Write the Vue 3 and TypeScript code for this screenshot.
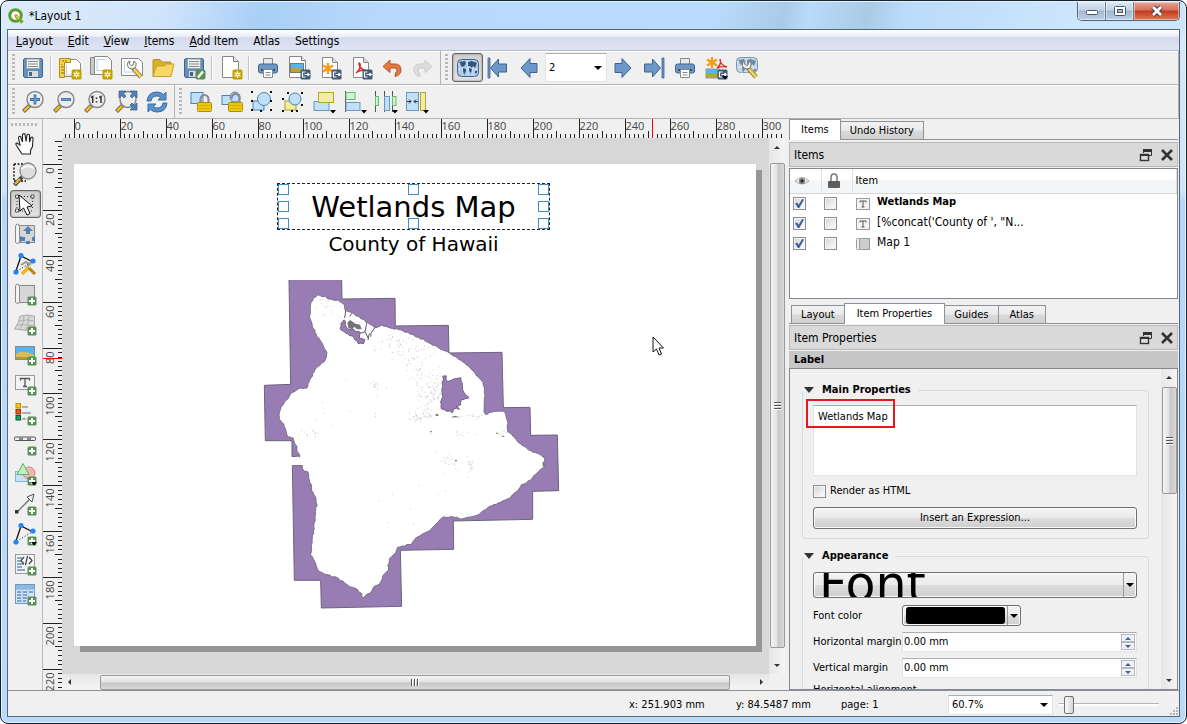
<script setup lang="ts">
import { ref } from 'vue'

interface Tool {
  icon: string
  label: string
  pressed?: boolean
  sep?: boolean
}
interface Tick {
  pos: number
  size: number
  label: string
}
interface LayoutItem {
  name: string
  kind: string
  visible: boolean
  locked: boolean
  bold: boolean
}

const plus =
  '<rect x="14.500" y="14.500" width="9" height="9" rx="1.500" fill="#5a8f55"/><path d="M19 16v6M16 19h6" stroke="#fff" stroke-width="2"/>'
const drop = '<path d="M18 20h6l-3 3.500z" fill="#000"/>'
const star =
  '<rect x="13.500" y="13.500" width="10" height="10" rx="1.500" fill="#c4a000"/><path d="M18.500 15v7M15.500 16.800l6 3.500M15.500 20.200l6-3.500" stroke="#fffbd0" stroke-width="1.200"/><circle cx="18.500" cy="18.500" r="1.900" fill="#fffbd0"/><circle cx="18.500" cy="18.500" r=".8" fill="#c4a000"/>'
const exp =
  '<rect x="13.500" y="13.500" width="10" height="10" rx="1.500" fill="#415a75"/><path d="M18.500 16h-3v5h3M17.500 18.500h4.500M20.500 16.800l1.700 1.700l-1.700 1.700" fill="none" stroke="#fff" stroke-width="1.200"/>'
const page = '<path d="M4.500 1.500h10l5 5v15h-15z" fill="#fff" stroke="#888"/><path d="M14.500 1.500v5h5" fill="#ddd" stroke="#888"/>'
const glass =
  '<path d="M9 15L2.500 21.500" stroke="#555" stroke-width="4"/><path d="M8 16l-5 5" stroke="#f5b921" stroke-width="2.500"/><circle cx="14" cy="9.500" r="8" fill="#ececec" stroke="#858585" stroke-width="1.400"/>'
const printer =
  '<path d="M7.500 2.500h9v7h-9z" fill="#e8e8e8" stroke="#888"/><rect x="2.500" y="8" width="19" height="9" rx="2" fill="#6d97c4" stroke="#45658a"/><path d="M5 14h14" stroke="#34516f" stroke-width="2"/><path d="M7.500 13.500h9v8h-9z" fill="#fff" stroke="#888"/><path d="M9.500 16.500h5M9.500 19h5" stroke="#888"/>'
const floppy =
  '<path d="M3.500 2.500h17l1 1v17l-1 1h-17l-1-1v-17z" fill="#6490bd" stroke="#41638c"/><rect x="5.500" y="3" width="13" height="9.500" fill="#f3f3f3" stroke="#8aa"/><path d="M7 5.500h10M7 8h10M7 10.500h10" stroke="#888"/><rect x="7" y="15" width="10" height="6" fill="#ddd"/><rect x="8" y="16" width="3" height="4" fill="#45658a"/>'
const world =
  '<rect x="1.500" y="3.500" width="21" height="17" rx="4" fill="#a9c8ea" stroke="#41638c"/><path d="M2 8h20M2 13h20M7 4v16M12 4v16M17 4v16" stroke="#e1eefb" stroke-width=".8"/><path d="M3 6l6-1 1 3-3 3-2-1-1-3zM7 12l3 1v2l-2 4-1-4zM12 6l4-1 5 2-2 5-2-2-1 2-2-2-2 0zM13 12l3 1-1 4-2-2zM19 15h2v2h-2z" fill="#345573"/>'
const roll =
  '<path d="M6 3.500h15.500v17H6z" fill="#d6d6d6" stroke="#8a8a8a"/><path d="M2.500 5q0-3 2-3t2 3v16q-4 1-4-1z" fill="#f4f4f4" stroke="#8a8a8a"/>'
const lock =
  '<path d="M12.500 13V9.500a4 4.500 0 0 1 8 0V13" fill="none" stroke="#8b8b8b" stroke-width="2.200"/><rect x="9.500" y="12.500" width="14" height="9" rx="1" fill="#ecc90e" stroke="#b08e00"/><path d="M11 15.500h11M11 18.500h11" stroke="#d4ad00"/>'
const nodes = '<path d="M3 19L8 4l12 6" fill="none" stroke="#111" stroke-width="1.300"/>'
const dots = '<circle cx="3" cy="20" r="2.600" fill="#2684f5"/><circle cx="8" cy="3.500" r="2.600" fill="#2684f5"/><circle cx="20" cy="9" r="2.600" fill="#2684f5"/>'
const wrench =
  '<path d="M13 12l8 9" stroke="#8e7420" stroke-width="4.500"/><path d="M14 13l7 8" stroke="#edcf62" stroke-width="2.800"/><path d="M8 6q-2 4 1 6t6 0l1-2q1-3-2-5l-1 4-2 .5-1.500-1.500.5-3z" fill="#f2f2f2" stroke="#777"/>'
const pic = '<rect x="2.500" y="4.500" width="19" height="13" fill="#58b3f2" stroke="#888"/><path d="M3 12q6-5 18 1v4H3z" fill="#d8bd55"/><path d="M3 15h18v2H3z" fill="#b69635"/>'
const arrowL = '<path d="M3 12L12 2.500v5h7v9h-7v5z" fill="#6c98c9" stroke="#3d638f"/>'
const arrowR = '<path d="M20 12L11 2.500v5H4v9h7v5z" fill="#6c98c9" stroke="#3d638f"/>'
const corner = (a: string) => `<path d="${a}" fill="#4f82bb" stroke="#315d8e" stroke-width=".7"/>`

const icons: Record<string, string> = {
  save: floppy,
  newLayout:
    '<path d="M6.500 3.500h12l4 4v13h-16z" fill="#fff" stroke="#888"/><path d="M8.500 9v10h7" fill="none" stroke="#bccbe8"/><path d="M1.500 2.500h11v4h-6v15h-5z" fill="#f4d54f" stroke="#b39014"/><path d="M4 8v1M3 11h3M3 14h3M3 17h3M5 4v2M8 4v2" stroke="#947300"/>' + star,
  duplicate:
    '<path d="M1.500 1.500h13v17h-13z" fill="#c9c9c9" stroke="#888"/><path d="M5.500 .5h13l4 4v14h-17z" fill="#fff" stroke="#888"/><path d="M8 3.500h8M8 3.500v11h8" fill="none" stroke="#bccbe8"/>' + star,
  manager: '<path d="M1.500 2.500h17l4 4v13h-21z" fill="#fff" stroke="#888"/><path d="M4.500 5v11h12" fill="none" stroke="#bccbe8"/>' + wrench,
  folder:
    '<path d="M2 20.500V4.500q0-1 1-1h6l2 2.500h8q1 0 1 1v3z" fill="#d8ae2d" stroke="#b5902a"/><path d="M2 20.500L5.500 10h8l2-2h7.500l-3 12.500z" fill="#f7d765" stroke="#c9a02a"/>',
  saveAs: floppy + '<rect x="13.500" y="13.500" width="10" height="10" rx="2" fill="#5a8f55"/><path d="M16 21.500l5-6" stroke="#fff" stroke-width="2.500"/>',
  addPage: '<path d="M3.500 .5h11l5 5v16h-16z" fill="#fff" stroke="#888"/><path d="M14.500 .5v5h5" fill="#eee" stroke="#777"/>' + star,
  print: printer,
  image: '<path d="M2.500 .5h12l4 4v17h-16z" fill="#fff" stroke="#888"/><path d="M14.500 .5v4h4" fill="#eee" stroke="#777"/><rect x="3.500" y="7.500" width="13" height="9" fill="#58b3f2" stroke="#777"/><path d="M4 13q5-4 12 1v2H4z" fill="#b9a437"/>' + exp,
  svg: page + '<path d="M10 7v11M5 9.500l10 6M5 15.500l10-6" stroke="#f79a16" stroke-width="2.400"/>' + exp,
  pdf: page + '<path d="M7 17q5-4 4-9-1-2-1 0 1 6 8 7M7 17q3-3 9-3" fill="none" stroke="#df2b23" stroke-width="1.600"/>' + exp,
  undo: '<path d="M3 10.500L10 4v4h5q6 0 6 6 0 5-6 6.500l.5-3.500q1.500-1 1.500-3 0-2-3-2h-4v4.500z" fill="#e27a43" stroke="#b85522"/>',
  redo: '<path d="M21 10.500L14 4v4H9q-6 0-6 6 0 5 6 6.500L8.500 17Q7 16 7 14q0-2 3-2h4v4.500z" fill="#dcdedb" stroke="#c9ccc8"/>',
  atlas: world,
  first: '<path d="M1 2h2v20H1z" fill="#6c98c9" stroke="#3d638f" stroke-width=".8"/><path d="M3.500 12l8-9v5h8v8h-8v5z" fill="#6c98c9" stroke="#3d638f"/>',
  prev: arrowL,
  next: arrowR,
  last: '<path d="M20 2h2v20h-2z" fill="#6c98c9" stroke="#3d638f" stroke-width=".8"/><path d="M18.500 12l-8-9v5h-8v8h8v5z" fill="#6c98c9" stroke="#3d638f"/>',
  atlasExport:
    '<path d="M8 1v11M3 3.500l10 6M3 9.500l10-6" stroke="#f79a16" stroke-width="2.200"/><path d="M13 12q5-4 3-9 0 6 7 8-5-1-10 1" fill="none" stroke="#df2b23" stroke-width="1.400"/><rect x="2" y="13" width="13" height="9" fill="#58b3f2" stroke="#999"/><path d="M2.500 18h12v3.500h-12z" fill="#b9a437"/>' + exp + drop,
  atlasSettings: '<g opacity=".65" transform="translate(0 -2)">' + world.replace('height="17"', 'height="15"') + '</g>' + wrench,
  zoomIn: glass + '<path d="M14 4.500v10M9 9.500h10" stroke="#3d6fa8" stroke-width="2.800"/><path d="M14 5.500v8M10 9.500h8" stroke="#6ea0d6" stroke-width="1.200"/>',
  zoomOut: glass + '<path d="M9 9.500h10" stroke="#3d6fa8" stroke-width="2.800"/><path d="M10 9.500h8" stroke="#6ea0d6" stroke-width="1.200"/>',
  zoomOne: glass + '<path d="M9.700 13V6.500L8 7.500M18 13V6.500L16.300 7.500M13.500 7.500v1.500M13.500 11v1.500" fill="none" stroke="#333" stroke-width="1.500"/>',
  zoomFull:
    glass +
    corner('M5 1h7L9.500 3.500 12 6 10 8 7.500 5.500 5 8z') +
    corner('M23 1h-7l2.500 2.500L16 6l2 2 2.500-2.500L23 8z') +
    corner('M23 20h-7l2.500-2.500L16 15l2-2 2.500 2.500L23 13z'),
  refresh:
    '<path d="M2 11q1-9 10-9 4 0 6.500 2.500L21 2v8h-8l2.500-2.500Q14 6 12 6 7 6 6 11z" fill="#5b90cc" stroke="#3d6ca0"/><path d="M22 13q-1 9-10 9-4 0-6.500-2.500L3 22v-8h8l-2.500 2.500Q10 18 12 18q5 0 6-5z" fill="#5b90cc" stroke="#3d6ca0"/>',
  lockItems: '<rect x="3" y="2.500" width="12" height="11" fill="#bfe0f7" stroke="#4f83b5"/>' + lock,
  unlockItems:
    '<rect x="3" y="5.500" width="10" height="9" fill="#bfe0f7" stroke="#4f83b5"/><circle cx="16" cy="7" r="5" fill="#bfe0f7" stroke="#4f83b5"/>' +
    lock.replace('M12.500 13V9.500a4 4.500 0 0 1 8 0V13', 'M12.500 9V8a4 4.500 0 0 1 8 1V13'),
  group:
    '<rect x="3" y="11" width="11" height="9" fill="#bfe0f7" stroke="#4f83b5"/><circle cx="14" cy="9" r="6.500" fill="#bfe0f7" stroke="#4f83b5"/><path d="M1 1h2v2H1zM20 1h2v2h-2zM1 19h2v2H1zM20 19h2v2h-2zM10 20h2v2h-2zM20 10h2v2h-2zM1 10h2v2H1z" fill="#111"/>',
  ungroup:
    '<rect x="4" y="11" width="11" height="9" fill="#f3eda0" stroke="#ae9e31"/><circle cx="14" cy="9" r="6" fill="#bfe0f7" stroke="#4f83b5"/><path d="M6 2h2v2H6zM20 2h2v2h-2zM1 8h2v2H1zM1 20h2v2H1zM15 20h2v2h-2zM20 14h2v2h-2zM10 20h2v2h-2z" fill="#111"/>',
  raise: '<rect x="2" y="11.500" width="15" height="9" fill="#bfe0f7" stroke="#6a98c2"/><rect x="6.500" y="2.500" width="15" height="10" fill="#f3eda0" stroke="#b4a437"/>' + drop,
  align: '<path d="M2.500 1v21" stroke="#555"/><rect x="3" y="2.500" width="9" height="7" fill="#c8f7cc" stroke="#70b577"/><rect x="3" y="12.500" width="14" height="8" fill="#bfe0f7" stroke="#6a98c2"/>' + drop,
  distribute:
    '<path d="M1.500 1v21M10.500 1v21M18.500 1v21" stroke="#555"/><rect x="1.500" y="6.500" width="3" height="9" fill="#c8f7cc" stroke="#70b577"/><rect x="10.500" y="6.500" width="5" height="14" fill="#bfe0f7" stroke="#6a98c2"/><rect x="18.500" y="6.500" width="3.500" height="9" fill="#c8f7cc" stroke="#70b577"/>' + drop,
  resize:
    '<rect x="1.500" y="2.500" width="12" height="18" fill="#bfe0f7" stroke="#6a98c2"/><rect x="15.500" y="2.500" width="5" height="18" fill="#f3eda0" stroke="#b4a437"/><path d="M2 11.500h4M4 9.500l2 2-2 2M13 11.500H9M11 9.500l-2 2 2 2" fill="none" stroke="#333"/>' + drop,
  pan: '<path d="M8 20.500l-4.500-7q-1.500-2.500.5-2.500l3 2L5.500 6q0-2 2-1.500L9.500 10 9.500 3q.500-2 2.500-1L13 9.500 14 3q1-1.500 2.500 0L16.500 10l1.500-4.500q2-1 2 1l-.5 8-2 4v3.500H9z" fill="#fff" stroke="#222" stroke-width="1.100"/>',
  zoomTool:
    '<path d="M1 2h9M1 2v17M1 19h12" stroke="#111" stroke-width="1.400" stroke-dasharray="2 1.500" fill="none"/><path d="M9 15L1.500 23" stroke="#444" stroke-width="4"/><path d="M7 17l-5 5" stroke="#f5b921" stroke-width="2.300"/><circle cx="15" cy="9" r="8" fill="#ddd" stroke="#888" stroke-width="1.300"/><path d="M8 7q5-5 13-1" stroke="#f8f8f8" fill="none" stroke-width="2"/>',
  select:
    '<path d="M5 4.500h13M4 6v12M19.500 6v12M6 19h13" stroke="#333" stroke-dasharray="1 2" fill="none"/><path d="M2.500 3h3v3h-3zM18 3h3v3h-3zM2.500 17h3v3h-3z" fill="#eee" stroke="#555"/><path d="M6 3l1 16 3.500-3 3.500 7 3-1.500-3-6.500 5-1z" fill="#fff" stroke="#111"/>',
  moveContent:
    roll + '<path d="M15 4l5 5h-3v3h-4V9h-3zM13 19h4v3h-4zM22 14v6l-3-1.500v-3zM7 14l2 1h3v4H9l-2 1z" fill="#4f7fb4"/>',
  editNodes: nodes + dots + '<path d="M4 19L19 10" stroke="#222" stroke-dasharray="1 2"/><path d="M8 13l5-3 4 2-3 3 8 7" fill="none" stroke="#9a9a9a" stroke-width="2"/><path d="M16 15l-7 7" stroke="#edb61e" stroke-width="3.500"/><path d="M16 16l6 6" stroke="#b98414" stroke-width="3"/>',
  addMap: roll + plus,
  add3d: '<path d="M1.500 17Q6 11 7 4q7-2 14.500 0v14q-9 1-20-1z" fill="#d8d8d8" stroke="#aaa"/><path d="M6 9q8-2 15 0M4 13q9-1 17 1M11 3.500q0 8-4 14M16 3.500q0 8-3 14" fill="none" stroke="#b3b3b3"/>' + plus,
  addPicture: pic + plus,
  addLabel: '<rect x="2.500" y="3.500" width="19" height="14" fill="#f4f4f4" stroke="#999"/><path d="M7.500 8.500V6.500h9v2M12 6.500v8M10 14.500h4" fill="none" stroke="#555" stroke-width="1.300"/>' + plus,
  addLegend:
    '<rect x="3" y="1.500" width="4.500" height="4.500" fill="#fdc50d" stroke="#c68c00"/><rect x="3" y="7.500" width="4.500" height="4.500" fill="#f4511e" stroke="#a52d00"/><rect x="3" y="13.500" width="4.500" height="4.500" fill="#12a35b" stroke="#00622f"/><path d="M9 5h6M9 11h9M9 17h4" stroke="#999" stroke-width="1.600"/>' + plus,
  addScale: '<rect x="1.500" y="5" width="21" height="3.500" rx="1" fill="#eee" stroke="#555"/><path d="M6 6.700h4M14 6.700h4" stroke="#888" stroke-width="2.500"/>' + plus,
  addShape: '<rect x="2.500" y="9.500" width="13" height="10" fill="#c4e2f8" stroke="#86b4da"/><circle cx="16" cy="11" r="6" fill="#f3b4b4" stroke="#d88383"/><path d="M10 1.500l6 11H4z" fill="#bdf0bd" stroke="#62b166"/>' + plus + drop,
  addArrow: '<path d="M4 20L18 6" stroke="#777" stroke-width="1.400"/><path d="M21 2l-7 3 5 5z" fill="#eee" stroke="#555"/><rect x="2" y="18" width="3.500" height="3.500" fill="#333"/>' + plus,
  addNodes: nodes + '<path d="M4 19L19 10" stroke="#222" stroke-dasharray="1 2"/>' + dots + plus + drop,
  addHtml:
    '<rect x="2.500" y="2.500" width="19" height="19" fill="#f4f4f4" stroke="#999"/><path d="M4 6h5M4 9h4M4 12h7M4 15h5M4 18h8" stroke="#5d8fc5" stroke-width="1.600"/><path d="M11 5L8 8.500l3 3.500M16 5l3 3.500-3 3.500M14.500 4l-2 9" fill="none" stroke="#444" stroke-width="1.200"/>' + plus,
  addTable:
    '<rect x="2.500" y="2.500" width="19" height="19" fill="#d5e5f6" stroke="#6d98c6"/><path d="M3 3h18v4.500H3z" fill="#8db6e0"/><path d="M4 10h4M10 10h4M16 10h4M4 13h4M10 13h4M4 16h4M10 16h4M4 19h4M10 19h3" stroke="#5d8fc5" stroke-width="1.300"/><path d="M2.500 7.500h19M9 3v18M15 3v18" stroke="#a5c2e2" stroke-width=".8"/>' + plus,
}

const menus = [
  ['L', 'ayout'], ['E', 'dit'], ['V', 'iew'], ['I', 'tems'], ['A', 'dd Item'], ['', 'Atlas'], ['', 'Settings'],
]
const layoutTools: Tool[] = [
  { icon: 'save', label: 'Save project', sep: true },
  { icon: 'newLayout', label: 'New layout' },
  { icon: 'duplicate', label: 'Duplicate layout' },
  { icon: 'manager', label: 'Layout manager' },
  { icon: 'folder', label: 'Add items from template' },
  { icon: 'saveAs', label: 'Save as template', sep: true },
  { icon: 'addPage', label: 'Add pages', sep: true },
  { icon: 'print', label: 'Print layout' },
  { icon: 'image', label: 'Export as image' },
  { icon: 'svg', label: 'Export as SVG' },
  { icon: 'pdf', label: 'Export as PDF' },
  { icon: 'undo', label: 'Undo' },
  { icon: 'redo', label: 'Redo' },
]
const atlasBefore: Tool[] = [
  { icon: 'atlas', label: 'Preview atlas', pressed: true },
  { icon: 'first', label: 'First feature' },
  { icon: 'prev', label: 'Previous feature' },
]
const atlasAfter: Tool[] = [
  { icon: 'next', label: 'Next feature' },
  { icon: 'last', label: 'Last feature' },
  { icon: 'print', label: 'Print atlas' },
  { icon: 'atlasExport', label: 'Export atlas' },
  { icon: 'atlasSettings', label: 'Atlas settings' },
]
const zoomTools: Tool[] = [
  { icon: 'zoomIn', label: 'Zoom in' },
  { icon: 'zoomOut', label: 'Zoom out' },
  { icon: 'zoomOne', label: 'Zoom to 100%' },
  { icon: 'zoomFull', label: 'Zoom full' },
  { icon: 'refresh', label: 'Refresh view' },
]
const actionTools: Tool[] = [
  { icon: 'lockItems', label: 'Lock selected items' },
  { icon: 'unlockItems', label: 'Unlock all items' },
  { icon: 'group', label: 'Group items' },
  { icon: 'ungroup', label: 'Ungroup items' },
  { icon: 'raise', label: 'Raise selected items' },
  { icon: 'align', label: 'Align selected items' },
  { icon: 'distribute', label: 'Distribute items' },
  { icon: 'resize', label: 'Resize items' },
]
const sideTools: Tool[] = [
  { icon: 'pan', label: 'Pan layout' },
  { icon: 'zoomTool', label: 'Zoom' },
  { icon: 'select', label: 'Select or move item', pressed: true },
  { icon: 'moveContent', label: 'Move item content' },
  { icon: 'editNodes', label: 'Edit nodes item' },
  { icon: 'addMap', label: 'Add map' },
  { icon: 'add3d', label: 'Add 3D map' },
  { icon: 'addPicture', label: 'Add picture' },
  { icon: 'addLabel', label: 'Add label' },
  { icon: 'addLegend', label: 'Add legend' },
  { icon: 'addScale', label: 'Add scale bar' },
  { icon: 'addShape', label: 'Add shape' },
  { icon: 'addArrow', label: 'Add arrow' },
  { icon: 'addNodes', label: 'Add node item' },
  { icon: 'addHtml', label: 'Add HTML' },
  { icon: 'addTable', label: 'Add attribute table' },
]

const scale = 2.294
function ticks(origin: number, from: number, to: number): Tick[] {
  const out: Tick[] = []
  for (let mm = from; mm <= to; mm += 2) {
    const major = mm % 20 === 0 && mm >= 0
    out.push({
      pos: Math.round(origin + mm * scale) + 0.5,
      size: major ? 19 : mm % 10 === 0 ? 7 : 4,
      label: major ? String(mm) : '',
    })
  }
  return out
}
const hTicks = ticks(12, -4, 308)
const vTicks = ticks(26, -10, 228)

function random(seed: number): () => number {
  let s = seed
  return () => {
    s = (s * 16807) % 2147483647
    return s / 2147483647
  }
}
function roughPath(flat: number[], amount: number): string {
  const rnd = random(77)
  const pts: string[] = []
  const n = flat.length / 2
  for (let i = 0; i < n; i++) {
    const x0 = flat[i * 2]
    const y0 = flat[i * 2 + 1]
    const x1 = flat[((i + 1) % n) * 2]
    const y1 = flat[((i + 1) % n) * 2 + 1]
    const steps = Math.max(1, Math.round(Math.hypot(x1 - x0, y1 - y0) / 7))
    for (let k = 0; k < steps; k++) {
      const t = k / steps
      const x = x0 + (x1 - x0) * t + (rnd() - 0.5) * amount
      const y = y0 + (y1 - y0) * t + (rnd() - 0.5) * amount
      pts.push(`${x.toFixed(1)},${y.toFixed(1)}`)
    }
  }
  return `M${pts.join('L')}Z`
}
const quads =
  'M117 330L122 643L43 646L46 812H126V860L148 858L157 887H127L133 1231H212L214 1314L455 1309L451 1141L611 1138L610 1053L848 1048V964L926 962L922 795L842 796L840 712L760 713L756 547L597 549L595 466L436 468L435 385L276 387L275 330'
const coast = roughPath([
  205, 376, 225, 380, 245, 388, 270, 393, 285, 405, 287, 420, 300, 427, 320, 437, 340, 450, 355, 460, 377, 472, 385, 470,
  400, 466, 420, 474, 440, 477, 470, 487, 500, 500, 530, 515, 560, 530, 590, 545, 620, 563, 650, 585, 675, 610, 695, 632,
  703, 648, 704, 690, 703, 725, 708, 733, 725, 727, 745, 722, 760, 725, 770, 740, 772, 760, 772, 785, 790, 798, 797, 810,
  815, 825, 835, 840, 855, 848, 875, 855, 886, 865, 880, 890, 860, 910, 835, 933, 815, 945, 800, 965, 780, 983, 750, 997,
  720, 1010, 700, 1022, 680, 1035, 660, 1042, 635, 1046, 605, 1040, 580, 1042, 560, 1060, 548, 1072, 540, 1082, 520, 1090,
  500, 1100, 485, 1120, 465, 1128, 443, 1132, 435, 1150, 420, 1165, 415, 1180, 415, 1200, 400, 1215, 388, 1245, 375, 1248,
  360, 1268, 337, 1285, 334, 1270, 315, 1255, 290, 1243, 262, 1223, 225, 1213, 207, 1205, 195, 1180, 183, 1155, 184, 1125,
  190, 1090, 195, 1040, 200, 1005, 195, 980, 185, 963, 183, 945, 177, 930, 175, 905, 160, 903, 155, 887, 147, 858, 140, 830,
  130, 805, 110, 795, 104, 768, 92, 755, 86, 740, 92, 710, 110, 690, 130, 665, 150, 655, 170, 655, 180, 630, 195, 600, 215,
  580, 228, 570, 232, 550, 222, 530, 205, 505, 190, 475, 180, 440, 180, 410, 190, 385,
], 4)
const wetlandEast = roughPath([
  580, 620, 590, 618, 590, 635, 612, 625, 632, 624, 638, 640, 640, 658, 646, 672, 656, 685, 634, 690, 632, 705, 620, 708,
  628, 717, 612, 716, 606, 728, 590, 722, 574, 716, 572, 695, 578, 680, 574, 660, 578, 640,
], 4)
const wetlandNorth = roughPath([
  275, 462, 284, 448, 290, 475, 305, 478, 318, 482, 332, 486, 330, 502, 345, 508, 340, 522, 326, 520, 305, 498, 282, 486, 270, 474,
], 4)

function specks(): string {
  const rnd = random(4242)
  const clusters = [
    [440, 530, 70, 45, 45], [540, 680, 45, 60, 80], [510, 740, 45, 16, 40], [230, 410, 40, 45, 20], [370, 645, 22, 20, 12],
    [590, 880, 40, 35, 18], [660, 890, 12, 40, 18], [170, 790, 45, 15, 12], [640, 790, 60, 10, 8], [760, 790, 25, 12, 6],
    [670, 740, 50, 10, 12], [450, 1000, 170, 90, 8], [500, 560, 60, 60, 25], [400, 700, 220, 100, 12], [525, 620, 60, 40, 30],
  ]
  let d = ''
  for (const [cx, cy, rx, ry, n] of clusters) {
    for (let i = 0; i < n; i++) {
      const x = cx + (rnd() + rnd() - 1) * rx
      const y = cy + (rnd() + rnd() - 1) * ry
      d += `M${x.toFixed(0)} ${y.toFixed(0)}h3`
    }
  }
  return d
}
const speckPath = specks()

const items = ref<LayoutItem[]>([
  { name: 'Wetlands Map', kind: 'label', visible: true, locked: false, bold: true },
  { name: "[%concat('County of ', \"N...", kind: 'label', visible: true, locked: false, bold: false },
  { name: 'Map 1', kind: 'map', visible: true, locked: false, bold: false },
])
const handles = ['nw', 'n', 'ne', 'w', 'e', 'sw', 's', 'se']
const labelText = ref('Wetlands Map')
const renderHtml = ref(false)
const feature = ref('2')
const zoom = ref('60.7%')
const zoomLevel = ref(5)
const hMargin = ref('0.00 mm')
const vMargin = ref('0.00 mm')
</script>

<template>
  <div class="window">
    <header class="titlebar">
      <svg class="logo" viewBox="0 0 16 16" aria-hidden="true">
        <circle cx="7.500" cy="7.500" r="5.800" fill="#fff" stroke="#5b9e2f" stroke-width="3" />
        <path d="M8 8l6.500 6.500" stroke="#6fb02f" stroke-width="3.400" />
        <path d="M6.500 6.500h3.500L7 10z" fill="#ee7913" />
        <path d="M8.500 8l2.500 2.500" stroke="#f3e04a" stroke-width="1.600" />
      </svg>
      <span class="title">*Layout 1</span>
      <div class="winbtns">
        <button class="wb" aria-label="Minimize"><svg viewBox="0 0 14 12"><rect x="1.500" y="5.500" width="11" height="4" rx="1" fill="#fff" stroke="#4c5568" /></svg></button>
        <button class="wb" aria-label="Maximize"><svg viewBox="0 0 14 12"><rect x="1.500" y="1.500" width="11" height="9" rx="1" fill="#fff" stroke="#4c5568" /><rect x="4.500" y="4.500" width="5" height="3" fill="#a9bdd4" stroke="#4c5568" /></svg></button>
        <button class="wb close" aria-label="Close"><svg viewBox="0 0 14 12"><path d="M3 2l8 8M11 2l-8 8" stroke="#4f3a4a" stroke-width="4.600" /><path d="M3 2l8 8M11 2l-8 8" stroke="#fff" stroke-width="2.800" /></svg></button>
      </div>
    </header>

    <div class="client">
      <nav class="menubar">
        <button v-for="m in menus" :key="m[1]" class="menu"><u>{{ m[0] }}</u>{{ m[1] }}</button>
      </nav>

      <div class="toolrow">
        <div class="toolbar">
          <i class="grip"></i>
          <template v-for="t in layoutTools" :key="t.icon">
            <button class="tool" :aria-label="t.label"><svg viewBox="0 0 24 24" v-html="icons[t.icon]"></svg></button>
            <i v-if="t.sep" class="sep"></i>
          </template>
        </div>
        <div class="toolbar grow atlasbar">
          <i class="grip"></i>
          <button v-for="t in atlasBefore" :key="t.icon" class="tool" :class="{ pressed: t.pressed }" :aria-label="t.label"><svg viewBox="0 0 24 24" v-html="icons[t.icon]"></svg></button>
          <div class="combo feature">
            <select v-model="feature" aria-label="Atlas feature"><option>1</option><option>2</option><option>3</option></select>
          </div>
          <button v-for="t in atlasAfter" :key="t.icon" class="tool" :aria-label="t.label"><svg viewBox="0 0 24 24" v-html="icons[t.icon]"></svg></button>
        </div>
      </div>
      <div class="toolrow">
        <div class="toolbar">
          <i class="grip"></i>
          <button v-for="t in zoomTools" :key="t.icon" class="tool" :aria-label="t.label"><svg viewBox="0 0 24 24" v-html="icons[t.icon]"></svg></button>
        </div>
        <div class="toolbar grow">
          <i class="grip"></i>
          <button v-for="t in actionTools" :key="t.icon" class="tool" :aria-label="t.label"><svg viewBox="0 0 24 24" v-html="icons[t.icon]"></svg></button>
        </div>
      </div>

      <main class="main">
        <aside class="side">
          <i class="grip flat"></i>
          <button v-for="t in sideTools" :key="t.icon" class="tool" :class="{ pressed: t.pressed }" :aria-label="t.label"><svg viewBox="0 0 24 24" v-html="icons[t.icon]"></svg></button>
        </aside>

        <section class="workspace">
          <div class="ruler-corner"></div>
          <svg class="ruler-h" aria-hidden="true">
            <g v-for="t in hTicks" :key="t.pos">
              <line :x1="t.pos" :x2="t.pos" :y1="19 - t.size" y2="19" class="tick" />
              <text v-if="t.label" :x="t.pos" y="11">{{ t.label }}</text>
            </g>
            <line x1="590.5" x2="590.5" y1="0" y2="19" class="mark" />
          </svg>
          <svg class="ruler-v" aria-hidden="true">
            <g v-for="t in vTicks" :key="t.pos">
              <line :y1="t.pos" :y2="t.pos" :x1="19 - t.size" x2="19" class="tick" />
              <text v-if="t.label" :transform="`translate(11 ${t.pos + 3}) rotate(-90)`" text-anchor="end">{{ t.label }}</text>
            </g>
            <line x1="0" x2="19" y1="220.5" y2="220.5" class="mark" />
          </svg>
          <div class="canvas">
            <div class="page">
              <svg class="map" viewBox="0 300 990 1040">
                <path :d="quads" fill="#987db5" stroke="#6d627b" stroke-width="3" />
                <path :d="coast" fill="#fff" stroke="#6b6478" stroke-width="2.500" />
                <path d="M120 862h34l5 23h-40z" fill="#fff" />
                <path :d="wetlandEast" fill="#987db5" stroke="#5f5670" stroke-width="2.500" />
                <path :d="wetlandNorth" fill="#987db5" stroke="#5f5670" stroke-width="2.500" />
                <path d="M292 458l8-8 8 5 8 6 14 3 5 14-14 0-8-8-6 8-12-4z" fill="#77717d" />
                <path d="M287 422l-3 22M305 430l-6 10M350 460l-5 25 10 20M375 472l-12 18-1 10M345 485l-14 5M358 490l-4 20" fill="none" stroke="#5f5670" stroke-width="3" />
                <path d="M602 742l12-4 18 4z" fill="#5f5670" />
                <path :d="speckPath" stroke="#777" stroke-width="2" opacity=".5" />
                <path d="M557 732h8v6h-8zM878 875h5v14h-5zM738 788h7v3h-7zM755 797h8v3h-8zM615 870h6v4h-6zM540 783h5v4h-5z" fill="#777" />
              </svg>
              <div class="label-item selected">
                Wetlands Map
                <i v-for="h in handles" :key="h" class="handle" :class="h"></i>
              </div>
              <div class="label-item county">County of Hawaii</div>
            </div>
            <svg class="pointer" viewBox="0 0 12 20"><path d="M1 1v15l3.500-3 2.500 6 2.500-1-2.500-6h4.500z" fill="#fff" stroke="#111" /></svg>
          </div>
          <div class="scroll-v">
            <i class="arr up"></i><div class="track"><i class="thumb"><b></b></i></div><i class="arr down"></i>
          </div>
          <div class="scroll-h">
            <i class="arr left"></i><div class="track"><i class="thumb"><b></b></i></div><i class="arr right"></i>
          </div>
          <div class="scroll-corner"></div>
        </section>

        <aside class="docks">
          <div class="tabs" role="tablist">
            <button class="tab active" role="tab" aria-selected="true">Items</button>
            <button class="tab" role="tab">Undo History</button>
          </div>
          <div class="docktitle">
            <span>Items</span>
            <button aria-label="Float items panel"><svg viewBox="0 0 14 14"><path d="M4.500 5V1.500h8v6H9" fill="none" stroke="#333" /><path d="M4 1h9v3H4z" fill="#333" /><rect x="1.500" y="6.500" width="8" height="6" fill="#ddd" stroke="#333" stroke-width="1.400" /><path d="M1 6h9v2H1z" fill="#333" /></svg></button>
            <button aria-label="Close items panel"><svg viewBox="0 0 14 14"><path d="M2 2l10 10M12 2L2 12" stroke="#333" stroke-width="2.600" /></svg></button>
          </div>
          <div class="itemlist">
            <table>
              <colgroup><col class="c-check" /><col class="c-check" /><col /></colgroup>
              <thead>
                <tr>
                  <th><svg class="eye" viewBox="0 0 16 12"><path d="M1 6q7-7 14 0-7 6-14 0z" fill="#eee" stroke="#aaa" /><circle cx="8" cy="6" r="3" fill="#777" /><circle cx="8" cy="6" r="1.300" fill="#222" /></svg></th>
                  <th><svg class="padlock" viewBox="0 0 12 16"><path d="M3 8V4.500a3 3.500 0 0 1 6 0V8" fill="none" stroke="#777" stroke-width="1.500" /><rect y="8" width="12" height="7" rx="1" fill="#5d5d5d" /></svg></th>
                  <th class="name">Item</th>
                </tr>
              </thead>
              <tbody>
                <tr v-for="it in items" :key="it.name">
                  <td><input v-model="it.visible" type="checkbox" :aria-label="`${it.name} visible`" /></td>
                  <td><input v-model="it.locked" type="checkbox" :aria-label="`${it.name} locked`" /></td>
                  <td>
                    <div class="cell">
                      <svg viewBox="0 0 14 12">
                        <template v-if="it.kind === 'label'"><rect x=".5" y=".5" width="13" height="11" fill="#f4f4f4" stroke="#999" /><path d="M4 4.500V3h6v1.500M7 3v6M5.500 9h3" fill="none" stroke="#555" /></template>
                        <template v-else><rect x="2.500" y=".5" width="11" height="11" fill="#ccc" stroke="#999" /><rect x=".5" y=".5" width="3" height="11" rx="1" fill="#f3f3f3" stroke="#999" /></template>
                      </svg>
                      <span :class="{ bold: it.bold }">{{ it.name }}</span>
                    </div>
                  </td>
                </tr>
              </tbody>
            </table>
          </div>

          <div class="tabs lower" role="tablist">
            <button class="tab" role="tab">Layout</button>
            <button class="tab active" role="tab" aria-selected="true">Item Properties</button>
            <button class="tab" role="tab">Guides</button>
            <button class="tab" role="tab">Atlas</button>
          </div>
          <div class="docktitle">
            <span>Item Properties</span>
            <button aria-label="Float properties panel"><svg viewBox="0 0 14 14"><path d="M4.500 5V1.500h8v6H9" fill="none" stroke="#333" /><path d="M4 1h9v3H4z" fill="#333" /><rect x="1.500" y="6.500" width="8" height="6" fill="#ddd" stroke="#333" stroke-width="1.400" /><path d="M1 6h9v2H1z" fill="#333" /></svg></button>
            <button aria-label="Close properties panel"><svg viewBox="0 0 14 14"><path d="M2 2l10 10M12 2L2 12" stroke="#333" stroke-width="2.600" /></svg></button>
          </div>
          <h2 class="kind">Label</h2>
          <div class="props">
            <form class="form" @submit.prevent>
              <fieldset class="main-props">
                <legend><i class="tri"></i>Main Properties</legend>
                <div class="textwrap">
                  <textarea v-model="labelText" aria-label="Label text" spellcheck="false"></textarea>
                  <i class="callout"></i>
                </div>
                <label class="check"><input v-model="renderHtml" type="checkbox" />Render as HTML</label>
                <button type="button" class="push">Insert an Expression...</button>
              </fieldset>
              <fieldset class="appearance">
                <legend><i class="tri"></i>Appearance</legend>
                <button type="button" class="push fontbtn" aria-label="Font"><span class="fonttext">Font</span><i class="split"></i></button>
                <div class="row">
                  <label for="fcolor">Font color</label>
                  <button id="fcolor" type="button" class="push colorbtn"><i class="swatch"></i><i class="split"></i></button>
                </div>
                <div class="row">
                  <label for="hm">Horizontal margin</label>
                  <div class="spin"><input id="hm" v-model="hMargin" type="text" /><span class="steps"><button type="button" aria-label="Increase"><i class="s-up"></i></button><button type="button" aria-label="Decrease"><i class="s-down"></i></button></span></div>
                </div>
                <div class="row">
                  <label for="vm">Vertical margin</label>
                  <div class="spin"><input id="vm" v-model="vMargin" type="text" /><span class="steps"><button type="button" aria-label="Increase"><i class="s-up"></i></button><button type="button" aria-label="Decrease"><i class="s-down"></i></button></span></div>
                </div>
                <div class="align-label">Horizontal alignment</div>
              </fieldset>
            </form>
            <div class="scroll-v inner">
              <i class="arr up"></i><div class="track"><i class="thumb"><b></b></i></div><i class="arr down"></i>
            </div>
          </div>
        </aside>
      </main>

      <footer class="status">
        <span class="sx">x: 251.903 mm</span>
        <span class="sy">y: 84.5487 mm</span>
        <span class="sp">page: 1</span>
        <div class="combo zoom">
          <select v-model="zoom" aria-label="Zoom level"><option>60.7%</option><option>100%</option></select>
        </div>
        <input v-model="zoomLevel" class="slider" type="range" min="0" max="100" aria-label="Zoom" />
        <svg class="sizegrip" viewBox="0 0 9 9"><path d="M7 1h2M7 4h2M4 4h2M7 7h2M4 7h2M1 7h2" stroke="#b5b5b5" stroke-width="2" /></svg>
      </footer>
    </div>
  </div>
</template>

<style>
body {
  margin: 0;
  background: #fff;
}
</style>

<style scoped>
* {
  box-sizing: border-box;
}
i {
  display: block;
  font-style: normal;
}
button {
  font: inherit;
  color: inherit;
  padding: 0;
  border: 0;
  background: none;
}
.window {
  height: 100vh;
  display: flex;
  flex-direction: column;
  padding: 1px 6px 6px;
  border: 1px solid #1d232b;
  border-radius: 8px;
  background:
    linear-gradient(100deg, #dcebfa, #cfe4fa 14%, #bcdaf8 18%, #a9cff5 22%, #b7d9fa 32%, #badcfc 60%, #a9cbe8 66%, #b9dbfa 68%, #a9cbe6 73%, #b9dbfa 76%, #cde5fb 90%) 0 0 / 100% 28px no-repeat,
    linear-gradient(#d5e8fb, #d0e4fa 190px, #b5d7fa 200px, #b9dafb);
  box-shadow: inset 0 0 0 1px #dff2ff;
  font: 11px/14px "DejaVu Sans Condensed", "Open Sans", sans-serif;
  color: #000;
}
.titlebar {
  flex: 0 0 27px;
  display: flex;
  align-items: center;
  padding-left: 1px;
  font-size: 12px;
}
.logo {
  width: 16px;
  height: 16px;
  margin-right: 5px;
}
.title {
  flex: 1;
}
.winbtns {
  display: flex;
  align-self: flex-start;
  border: 1px solid #53647c;
  border-top: 0;
  border-radius: 0 0 5px 5px;
  overflow: hidden;
}
.wb {
  width: 28px;
  height: 18px;
  display: grid;
  place-items: center;
  background: linear-gradient(#dbe6f3, #c2d3e6 45%, #9fb5ce 50%, #bed2e8);
  border-right: 1px solid #6b7d95;
  box-shadow: inset 0 0 0 1px rgba(255, 255, 255, 0.45);
}
.wb svg {
  width: 14px;
  height: 12px;
}
.close {
  width: 45px;
  border-right: 0;
  background: linear-gradient(#e8a493, #d6705a 45%, #c13a1d 50%, #dc7a55);
}
.client {
  flex: 1;
  min-height: 0;
  display: flex;
  flex-direction: column;
  border: 1px solid #566776;
  background: #f0f0f0;
}
.menubar {
  flex: 0 0 21px;
  display: flex;
  align-items: center;
  padding: 1px 0 0 8px;
  gap: 15px;
  font-size: 12px;
  background: linear-gradient(#fff, #e8ecf6 35%, #d4daec 38%, #dfe4f4);
  border-bottom: 1px solid #b6bccc;
}
.toolrow {
  flex: 0 0 34px;
  display: flex;
  border-bottom: 1px solid #b3b3b3;
  box-shadow: inset 0 1px #fff;
}
.toolbar {
  display: flex;
  align-items: center;
  padding: 0 2px 0 4px;
  border-right: 1px solid #b3b3b3;
}
.grow {
  flex: 1;
}
.grip {
  width: 3px;
  height: 27px;
  margin-right: 2px;
  background: repeating-linear-gradient(#b8b8b8 0 2px, transparent 2px 4px);
}
.atlasbar .grip {
  margin-right: 4px;
}
.grip.flat {
  width: 28px;
  height: 3px;
  margin: 4px 0;
  background: repeating-linear-gradient(90deg, #b8b8b8 0 2px, transparent 2px 4px);
}
.tool {
  width: 31px;
  height: 29px;
  display: grid;
  place-items: center;
  border-radius: 3px;
}
.tool svg {
  width: 24px;
  height: 24px;
}
.pressed {
  border: 1px solid #666;
  background: linear-gradient(#cfcfcf, #e2e2e2);
  box-shadow: inset 0 0 2px #777;
}
.sep {
  width: 2px;
  height: 24px;
  margin: 0 2px;
  border-left: 1px solid #c4c4c4;
  border-right: 1px solid #fff;
}
.combo {
  position: relative;
  background: #fff;
  border: 1px solid #e0e3ea;
  border-top-color: #aaadb3;
}
.combo::after {
  content: "";
  position: absolute;
  right: 4px;
  top: 50%;
  margin-top: -2px;
  border: 4px solid transparent;
  border-top-color: #000;
  border-bottom: 0;
  pointer-events: none;
}
.combo select {
  width: 100%;
  height: 100%;
  padding: 0 0 0 3px;
  appearance: none;
  border: 0;
  background: none;
  font: inherit;
  color: inherit;
}
.feature {
  width: 62px;
  height: 29px;
}
.main {
  flex: 1;
  min-height: 0;
  display: flex;
}
.side {
  flex: 0 0 35px;
  display: flex;
  flex-direction: column;
  align-items: center;
  border-right: 1px solid #bbb;
}
.side .tool {
  flex: 0 0 28px;
  margin-bottom: 2px;
}
.workspace {
  flex: 1;
  min-width: 0;
  display: grid;
  grid-template: 19px 1fr 16px / 19px 1fr 16px;
  padding-right: 4px;
}
.ruler-corner {
  grid-area: 1 / 1;
}
.ruler-h {
  grid-area: 1 / 2 / 2 / 4;
  width: 100%;
  height: 100%;
}
.ruler-v {
  grid-area: 2 / 1 / 4 / 2;
  width: 100%;
  height: 100%;
}
.ruler-h,
.ruler-v {
  min-height: 0;
  font: 11px "Open Sans", sans-serif;
  fill: #444;
}
.tick {
  stroke: #222;
}
.mark {
  stroke: #ff0000;
}
.canvas {
  grid-area: 2 / 2;
  position: relative;
  overflow: hidden;
  background: #d7d7d7;
}
.page {
  position: absolute;
  left: 12px;
  top: 26px;
  width: 682px;
  height: 482px;
  background: #fff;
  box-shadow: 6px 6px #969696;
}
.map {
  position: absolute;
  left: 176px;
  top: 106px;
  width: 330px;
}
.label-item {
  position: absolute;
  text-align: center;
  font-family: "DejaVu Sans", sans-serif;
}
.selected {
  left: 203px;
  top: 19px;
  width: 273px;
  height: 47px;
  font-size: 29px;
  line-height: 47px;
  border: 1px dashed #222;
}
.county {
  left: 203px;
  top: 68px;
  width: 273px;
  font-size: 20px;
  line-height: 24px;
}
.handle {
  position: absolute;
  width: 11px;
  height: 11px;
  border: 1px solid #3d8fc4;
}
.nw, .w, .sw { left: 0; }
.n, .s { left: 130px; }
.ne, .e, .se { right: 0; }
.nw, .n, .ne { top: 0; }
.w, .e { top: 17px; }
.sw, .s, .se { bottom: 0; }
.pointer {
  position: absolute;
  left: 590px;
  top: 198px;
  width: 12px;
  height: 20px;
}
.scroll-v {
  grid-area: 2 / 3;
  display: flex;
  flex-direction: column;
  align-items: center;
  background: linear-gradient(90deg, #e6e6e6, #f4f4f4);
}
.scroll-h {
  grid-area: 3 / 2;
  display: flex;
  align-items: center;
  background: linear-gradient(#e6e6e6, #f4f4f4);
}
.scroll-corner {
  grid-area: 3 / 3;
}
.arr {
  flex: none;
  border: 3px solid transparent;
}
.up { border-bottom-color: #333; border-top: 0; margin: 8px 0 7px; }
.down { border-top-color: #333; border-bottom: 0; margin: 7px 0; }
.left { border-right-color: #333; border-left: 0; margin: 0 6px; }
.right { border-left-color: #333; border-right: 0; margin: 0 6px; }
.track {
  flex: 1;
  min-height: 0;
  display: flex;
}
.scroll-v .track {
  width: 15px;
  padding: 7px 0 9px;
}
.scroll-v .thumb {
  width: 15px;
  display: grid;
  place-items: center;
  border: 1px solid #999;
  border-radius: 2px;
  background: linear-gradient(90deg, #f5f5f5, #e2e2e2 45%, #c5c7c9 55%, #dadada);
}
.scroll-h .track {
  height: 15px;
  padding: 0 24px 0 23px;
}
.scroll-h .thumb {
  flex: 1;
  display: grid;
  place-items: center;
  border: 1px solid #999;
  border-radius: 2px;
  background: linear-gradient(#f5f5f5, #e2e2e2 45%, #c5c7c9 55%, #dadada);
}
.thumb b {
  width: 7px;
  height: 8px;
  background: repeating-linear-gradient(#555 0 1px, #fff 1px 2px, transparent 2px 3px);
}
.scroll-h .thumb b {
  width: 8px;
  height: 7px;
  background: repeating-linear-gradient(90deg, #555 0 1px, #fff 1px 2px, transparent 2px 3px);
}
.docks {
  flex: 0 0 390px;
  display: flex;
  flex-direction: column;
  padding-right: 1px;
}
.tabs {
  flex: 0 0 21px;
  display: flex;
  align-items: flex-end;
  margin-bottom: 2px;
  box-shadow: inset 0 -1px #8d9199;
}
.tab {
  height: 19px;
  padding: 0 9px;
  border: 1px solid #8d9199;
  border-left-width: 0;
  background: linear-gradient(#f2f2f2, #ebebeb 48%, #dadada 52%, #d0d0d0);
}
.tab.active {
  height: 21px;
  border: 1px solid #8d9199;
  border-bottom: 0;
  background: #fff;
  padding: 0 11px;
}
.lower {
  margin-top: 4px;
  margin-bottom: 1px;
  padding-left: 2px;
}
.lower .active {
  padding: 0 12px;
}
.lower .tab:first-child {
  border-left-width: 1px;
  border-right-width: 0;
}
.lower .tab:last-child {
  padding: 0 11px;
}
.docktitle {
  flex: 0 0 25px;
  display: flex;
  align-items: center;
  gap: 7px;
  padding: 0 3px 0 4px;
  margin-bottom: 1px;
  background: #d9d9d9;
  border: 1px solid #b8b8b8;
}
.docktitle span {
  flex: 1;
  font-size: 12px;
}
.docktitle button,
.docktitle svg {
  display: block;
  width: 14px;
  height: 14px;
}
.itemlist {
  flex: 0 0 131px;
  border: 1px solid #828790;
  background: #fff;
}
table {
  width: 100%;
  table-layout: fixed;
  border-collapse: collapse;
}
.c-check {
  width: 31px;
}
th {
  height: 24px;
  padding: 0;
  border-right: 1px solid #dfe3e8;
  border-bottom: 1px solid #d5d5d5;
  background: linear-gradient(#fff 45%, #f3f5f7 50%);
  font-weight: normal;
}
th.name {
  text-align: left;
  padding-left: 3px;
}
.eye {
  display: block;
  width: 16px;
  height: 12px;
  margin: auto 4px;
}
.padlock {
  display: block;
  width: 12px;
  height: 16px;
  margin: auto 6px;
}
td {
  height: 20px;
  padding: 0 0 0 3px;
}
input[type="checkbox"] {
  display: block;
  flex: none;
  width: 13px;
  height: 13px;
  margin: 0;
  appearance: none;
  border: 1px solid #8e8f8f;
  background: linear-gradient(135deg, #cfd3d9, #f5f5f5 75%);
  box-shadow: inset 0 0 0 1px #f4f4f4;
}
input[type="checkbox"]:checked::before {
  content: "";
  display: block;
  width: 9px;
  height: 9px;
  margin: 1px;
  background: #425c9c;
  clip-path: polygon(0 45%, 25% 42%, 40% 65%, 80% 0, 100% 5%, 48% 100%, 32% 100%);
}
.cell {
  display: flex;
  align-items: flex-start;
  gap: 7px;
  height: 20px;
  padding-left: 1px;
  font-size: 12px;
  line-height: 16px;
}
.cell svg {
  width: 14px;
  height: 12px;
  margin-top: 4px;
}
.bold {
  font-size: 11px;
  font-weight: bold;
}
.kind {
  flex: 0 0 17px;
  margin: 0;
  padding-left: 5px;
  background: #c6c6c6;
  font-size: 11px;
  line-height: 17px;
}
.props {
  flex: 1;
  min-height: 0;
  display: flex;
  border: 1px solid #828790;
  overflow: hidden;
}
.form {
  flex: 1;
  padding: 14px 12px 0 12px;
  overflow: hidden;
}
fieldset {
  display: flex;
  flex-direction: column;
  min-width: 0;
  margin: 0 0 10px;
  padding: 9px 11px 9px 10px;
  border: 1px solid #d3dde5;
  border-radius: 3px;
}
legend {
  display: flex;
  align-items: center;
  padding: 0 7px 0 1px;
  margin-left: -10px;
  font-weight: bold;
}
.tri {
  border: 5px solid transparent;
  border-top: 6px solid #333;
  border-bottom: 0;
  margin-right: 8px;
}
.textwrap {
  position: relative;
  height: 71px;
}
textarea {
  display: block;
  width: 100%;
  height: 100%;
  padding: 4px;
  resize: none;
  border: 1px solid #e0e3ea;
  border-top-color: #aaadb3;
  background: #fff;
  font: inherit;
}
.callout {
  position: absolute;
  left: -7px;
  top: -6px;
  width: 89px;
  height: 29px;
  border: 2px solid #e01b1b;
}
.check {
  display: flex;
  align-items: center;
  gap: 4px;
  margin: 8px 0 9px;
}
.push {
  height: 22px;
  border: 1px solid #707070;
  border-radius: 3px;
  background: linear-gradient(#f3f3f3, #ebebeb 48%, #dcdcdc 52%, #cfcfcf);
  box-shadow: inset 0 0 0 1px #fafafa;
}
.main-props {
  padding-top: 8px;
}
.appearance {
  gap: 6px;
}
.fontbtn {
  display: flex;
  align-items: center;
  height: 26px;
  margin-bottom: 1px;
  overflow: hidden;
}
.fonttext {
  flex: 1;
  padding-left: 5px;
  text-align: left;
  font: 49px/16px "DejaVu Sans", sans-serif;
}
.split {
  width: 13px;
  align-self: stretch;
  display: grid;
  place-items: center;
  border-left: 1px solid #999;
}
.split::after {
  content: "";
  border: 4px solid transparent;
  border-top-color: #000;
  border-bottom: 0;
}
.row {
  display: grid;
  grid-template-columns: 89px 1fr;
  align-items: center;
}
.colorbtn {
  width: 119px;
  height: 21px;
  display: flex;
  align-items: center;
  justify-content: space-between;
}
.swatch {
  width: 99px;
  height: 17px;
  margin-left: 3px;
  border-radius: 3px;
  background: #000;
}
.spin {
  display: flex;
  align-items: center;
  height: 20px;
  padding-right: 1px;
  border: 1px solid #e0e3ea;
  border-top-color: #aaadb3;
  background: #fff;
}
.spin input {
  flex: 1;
  min-width: 0;
  padding: 0 1px;
  border: 0;
  background: none;
  font: inherit;
}
.steps button {
  width: 14px;
  height: 8px;
  display: grid;
  place-items: center;
  border: 1px solid #b5b8c0;
  background: #f0f1f5;
}
.s-up,
.s-down {
  border: 3px solid transparent;
}
.s-up {
  border-top: 0;
  border-bottom-color: #4c5f9f;
}
.s-down {
  border-bottom: 0;
  border-top-color: #4c5f9f;
}
.align-label {
  line-height: 12px;
}
.inner {
  flex: 0 0 16px;
}
.inner .up {
  margin: 7px 0 6px;
}
.inner .track {
  padding: 2px 0 0;
}
.inner .thumb {
  height: 107px;
}
.status {
  flex: 0 0 26px;
  display: flex;
  align-items: center;
  justify-content: flex-end;
  padding-top: 2px;
  border-top: 1px solid #8d9199;
}
.sx {
  width: 107px;
}
.sy {
  width: 105px;
}
.sp {
  width: 107px;
}
.zoom {
  width: 105px;
  height: 20px;
}
.slider {
  appearance: none;
  width: 100px;
  height: 19px;
  margin: 0 10px 0 6px;
  background: linear-gradient(#b5b5b5, #b5b5b5) 0 8px / 100% 1px no-repeat, linear-gradient(#fff, #fff) 0 9px / 100% 2px no-repeat;
}
.slider::-webkit-slider-thumb {
  appearance: none;
  width: 10px;
  height: 18px;
  border: 1px solid #707070;
  border-radius: 2px;
  background: linear-gradient(90deg, #fafafa, #d5d5d5);
}
.sizegrip {
  width: 9px;
  height: 9px;
  margin-right: 1px;
  align-self: flex-end;
}
</style>
